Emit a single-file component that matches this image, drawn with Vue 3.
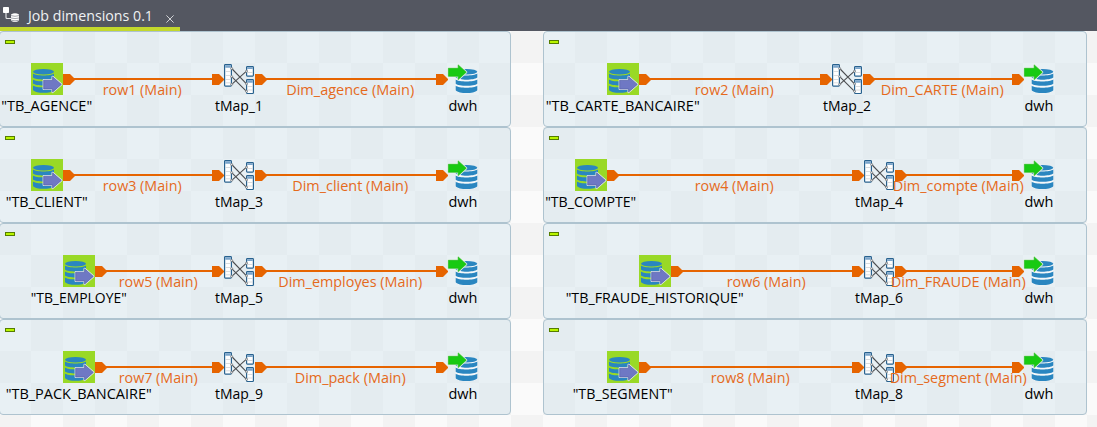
<script setup>
const columns = [
  {
    side: 'left',
    origin: -1,
    width: 512,
    jobs: [
      { source: '"TB_AGENCE"', sw: 91, x: 47, row: 'row1 (Main)', map: 'tMap_1', mx: 239, out: 'Dim_agence (Main)', ow: 128, dx: 463 },
      { source: '"TB_CLIENT"', sw: 82, x: 47, row: 'row3 (Main)', map: 'tMap_3', mx: 239, out: 'Dim_client (Main)', ow: 116, dx: 463 },
      { source: '"TB_EMPLOYE"', sw: 96, x: 79, row: 'row5 (Main)', map: 'tMap_5', mx: 239, out: 'Dim_employes (Main)', ow: 144, dx: 463 },
      { source: '"TB_PACK_BANCAIRE"', sw: 146, x: 79, row: 'row7 (Main)', map: 'tMap_9', mx: 239, out: 'Dim_pack (Main)', ow: 111, dx: 463 },
    ],
  },
  {
    side: 'right',
    origin: 543,
    width: 544,
    jobs: [
      { source: '"TB_CARTE_BANCAIRE"', sw: 154, x: 623, row: 'row2 (Main)', map: 'tMap_2', mx: 847, out: 'Dim_CARTE (Main)', ow: 123, dx: 1039 },
      { source: '"TB_COMPTE"', sw: 91, x: 591, row: 'row4 (Main)', map: 'tMap_4', mx: 879, out: 'Dim_compte (Main)', ow: 131, dx: 1039 },
      { source: '"TB_FRAUDE_HISTORIQUE"', sw: 178, x: 655, row: 'row6 (Main)', map: 'tMap_6', mx: 879, out: 'Dim_FRAUDE (Main)', ow: 135, dx: 1039 },
      { source: '"TB_SEGMENT"', sw: 100, x: 623, row: 'row8 (Main)', map: 'tMap_8', mx: 879, out: 'Dim_segment (Main)', ow: 137, dx: 1039 },
    ],
  },
]

for (const column of columns) {
  for (const job of column.jobs) {
    job.x -= column.origin
    job.mx -= column.origin
    job.dx -= column.origin
    job.links = [
      { from: job.x + 16, to: job.mx - 16, text: job.row, w: 79 },
      { from: job.mx + 16, to: job.dx - 16, text: job.out, w: job.ow },
    ]
  }
}
</script>

<template>
  <div class="editor">
    <svg class="defs" width="0" height="0" aria-hidden="true">
      <symbol id="source" viewBox="0 0 32 32">
        <rect width="32" height="32" fill="#99d926" />
        <g fill="#2a86c0">
          <ellipse cx="12.5" cy="8.7" rx="10.5" ry="2.8" />
          <path d="M2 10.6C5 13.2 20 13.2 23 10.6V14.6C20 17.3 5 17.3 2 14.6Z" />
          <path d="M2 16.4C5 19 20 19 23 16.4V20.6C20 23.2 5 23.2 2 20.6Z" />
          <path d="M2 22.4C5 25 20 25 23 22.4V27C20 30.8 5 30.8 2 27Z" />
        </g>
        <path d="M12.7 17.2H21.6V13.8L30.3 21.4L21.6 29V26H12.7Z" fill="#e4e9f4" stroke="#dde6ec" stroke-width="2.2" stroke-linejoin="round" />
        <path d="M12.7 17.2H21.6V13.8L30.3 21.4L21.6 29V26H12.7Z" fill="#6f78c4" stroke="#5560a6" stroke-width=".7" />
      </symbol>

      <symbol id="map" viewBox="0 0 32 32">
        <g fill="#fff" stroke="#28628f" stroke-width="1.2">
          <rect x="1.6" y="1.7" width="6.8" height="21.4" rx=".8" />
          <rect x="23.6" y="3.6" width="6.8" height="9.5" rx=".8" />
          <rect x="23.6" y="16.7" width="6.8" height="13.8" rx=".8" />
        </g>
        <path d="M2.2 2.3h5.6v2.5H2.2zM24.2 4.2h5.6v1.7h-5.6zM24.2 17.3h5.6v2.5h-5.6z" fill="#79a4ca" />
        <path d="M2.3 8.5h5.4M2.3 12.5h5.4M2.3 16.5h5.4M2.3 19.8h5.4M24.3 9.5h5.4M24.3 23.5h5.4M24.3 27h5.4" stroke="#cfd3d6" stroke-width=".8" />
        <path d="M8.7 5.5L23.5 20.8M8.7 13.6L23.5 28.3M8.7 21.3L23.5 8.2" fill="none" stroke="#4d4f52" stroke-width="1.1" />
        <g fill="#fff" stroke="#707477" stroke-width=".8">
          <circle cx="8.7" cy="5.5" r="1" /><circle cx="8.7" cy="13.6" r="1" /><circle cx="8.7" cy="21.3" r="1" />
          <circle cx="23.5" cy="8.2" r="1" /><circle cx="23.5" cy="20.8" r="1" /><circle cx="23.5" cy="28.3" r="1" />
        </g>
      </symbol>

      <symbol id="target" viewBox="0 0 32 32">
        <path d="M8.7 8.5C10 5.5 29 5.5 30.3 8.5V28C27 31 12 31 8.7 28Z" fill="#f3f7f9" />
        <g fill="#2a86c0">
          <ellipse cx="19.5" cy="8.7" rx="10.8" ry="2.8" />
          <path d="M8.7 10.6C12 13.2 27 13.2 30.3 10.6V14.6C27 17.5 12 17.5 8.7 14.6Z" />
          <path d="M8.7 16.6C12 19.2 27 19.2 30.3 16.6V20.8C27 23.5 12 23.5 8.7 20.8Z" />
          <path d="M8.7 22.8C12 25.4 27 25.4 30.3 22.8V27.2C27 31 12 31 8.7 27.2Z" />
        </g>
        <path d="M1.4 5.3H11.2V1.9L19.3 9.2L11.2 16.6V13.3H1.4Z" fill="#18ca12" stroke="#e9f3e9" stroke-width="2" stroke-linejoin="round" />
        <path d="M1.4 5.3H11.2V1.9L19.3 9.2L11.2 16.6V13.3H1.4Z" fill="#18ca12" stroke="#19b514" stroke-width=".6" />
      </symbol>
    </svg>

    <header class="tabs">
      <div class="tab">
        <svg class="tab-icon" width="18" height="18" viewBox="0 0 18 18">
          <rect x="0" y="1" width="6" height="6" rx=".8" fill="#fff" />
          <path d="M3 7V11.5Q3 12.5 4 12.5H8" fill="none" stroke="#e8e9eb" stroke-width="1.1" />
          <path d="M8 8.6Q12 6 16 8.6V14.7Q12 17.5 8 14.7Z" fill="#fff" />
          <path d="M8 9.6Q12 11 16 9.6M8 12Q12 13.2 16 12M8 14.2Q12 15.5 16 14.2" fill="none" stroke="#7b7e86" stroke-width=".7" />
        </svg>
        <svg class="title" width="130" height="27">
          <text x="0" y="21" textLength="125" lengthAdjust="spacingAndGlyphs">Job dimensions 0.1</text>
        </svg>
        <svg class="close" width="8" height="8" viewBox="0 0 8 8">
          <path d="M.4 .4L7.6 7.6M7.6 .4L.4 7.6" stroke="#d0d2d5" stroke-width="1" />
        </svg>
      </div>
    </header>

    <main class="canvas">
      <section v-for="column in columns" :key="column.side" class="column" :class="column.side">
        <article v-for="job in column.jobs" :key="job.map" class="subjob">
          <svg class="flow" :width="column.width" height="96">
            <rect x="6.5" y="9.5" width="9" height="3" fill="#b9f500" stroke="#567d00" />
            <use href="#source" :x="job.x - 16" y="32" width="32" height="32" />
            <use href="#map" :x="job.mx - 16" y="32" width="32" height="32" />
            <use href="#target" :x="job.dx - 16" y="32" width="32" height="32" />
            <g v-for="link in job.links" :key="link.text" class="link">
              <rect :x="link.from + 8" y="47" :width="link.to - link.from - 16" height="2" />
              <path :d="`M${link.from} 43h7l5 5v1l-5 5h-7z`" />
              <path :d="`M${link.to - 11} 43h7l5 5v1l-5 5h-7z`" />
            </g>
            <text
              v-for="link in job.links"
              :key="link.text"
              class="link-label"
              :x="(link.from + link.to) / 2 - 0.8"
              y="64"
              :textLength="link.w"
              lengthAdjust="spacingAndGlyphs"
            >{{ link.text }}</text>
            <text class="label" :x="job.x - 0.3" y="80" :textLength="job.sw" lengthAdjust="spacingAndGlyphs">{{ job.source }}</text>
            <text class="label" :x="job.mx" y="80" textLength="48" lengthAdjust="spacingAndGlyphs">{{ job.map }}</text>
            <text class="label" :x="job.dx" y="80" textLength="29" lengthAdjust="spacingAndGlyphs">dwh</text>
          </svg>
        </article>
      </section>
    </main>
  </div>
</template>

<style>
body {
  margin: 0;
  overflow: hidden;
}
</style>

<style scoped>
.editor {
  display: flex;
  flex-direction: column;
  width: 1097px;
  height: 427px;
  overflow: hidden;
  font-family: "Open Sans", "Noto Sans", sans-serif;
}

.defs {
  position: absolute;
}

.tabs {
  display: flex;
  flex: 0 0 31px;
  background: #545761;
}

.tab {
  display: flex;
  box-sizing: border-box;
  width: 180px;
  height: 31px;
  padding-left: 3px;
  border-bottom: 4px solid #c3d82c;
}

.tab-icon {
  flex: none;
  margin-top: 6px;
}

.title {
  flex: none;
  margin-left: 7px;
  overflow: visible;
}

.title text {
  fill: #eff1f3;
  font-size: 15px;
}

.close {
  flex: none;
  margin: 15px 0 0 8px;
}

.canvas {
  display: flex;
  flex: 1;
  gap: 32px;
  align-items: flex-start;
  margin-left: -1px;
  background: repeating-conic-gradient(#fafafa 0 25%, #f3f3f3 0 50%) 0 0 / 64px 64px;
}

.column {
  display: grid;
  grid-auto-rows: 96px;
}

.left {
  width: 512px;
}

.right {
  width: 544px;
}

.subjob {
  box-sizing: border-box;
  overflow: hidden;
  border: 1px solid #aec3cf;
  border-radius: 4px;
  background: rgba(205, 225, 235, 0.4);
}

.flow {
  display: block;
  margin: -1px;
}

.link {
  fill: #e66400;
}

.label,
.link-label {
  font-size: 14.7px;
  text-anchor: middle;
}

.label {
  fill: #000;
}

.link-label {
  fill: #e56a1c;
}
</style>
